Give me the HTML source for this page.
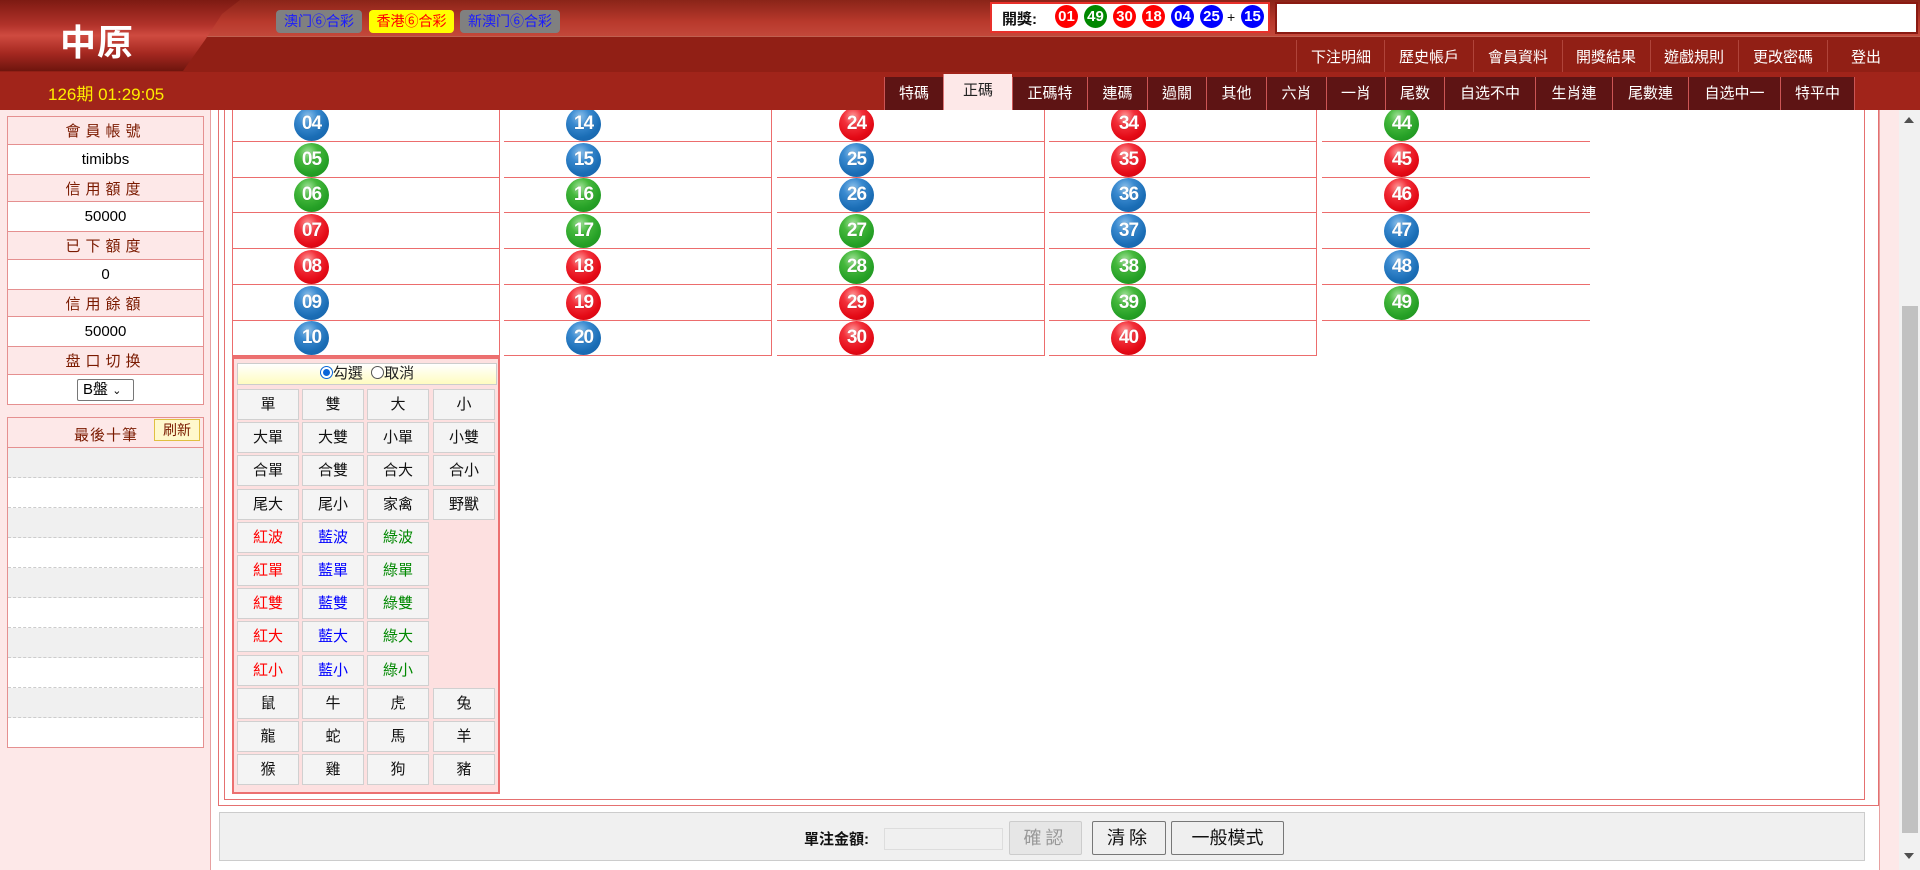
<!DOCTYPE html>
<html><head><meta charset="utf-8">
<style>
*{margin:0;padding:0;box-sizing:border-box}
body{width:1920px;height:870px;overflow:hidden;position:relative;background:#fff;font-family:"Liberation Sans","Noto Sans CJK TC",sans-serif;font-size:15px}
.abs{position:absolute}
#hdr{position:absolute;left:0;top:0;width:1920px;height:110px;z-index:5;background:#a1241a;overflow:hidden}
.ball{position:absolute;width:35px;height:34px;border-radius:50%;color:#fff;font-weight:bold;font-size:19px;text-align:center;line-height:34px;letter-spacing:-1px;text-shadow:0 0 1px rgba(0,0,0,.3)}
.b{background:radial-gradient(circle at 40% 28%,#8cc0ea 0,#3a8ad0 30%,#1a6db5 65%,#1760a6 100%)}
.r{background:radial-gradient(circle at 40% 28%,#ff9a9a 0,#f2303a 30%,#e40a16 65%,#c8000c 100%)}
.g{background:radial-gradient(circle at 40% 28%,#a2e29a 0,#45b83c 30%,#25a026 65%,#1d8a1d 100%)}
.cell{position:absolute;width:268px;height:36px;border-bottom:1px solid #ec6d6d}
.cr{border-right:1px solid #ec6d6d}
.cl{border-left:1px solid #ec6d6d}
.x1{left:232px}.x2{left:504px}.x3{left:777px}.x4{left:1049px}.x5{left:1322px}
.bx1{left:294px}.bx2{left:566px}.bx3{left:839px}.bx4{left:1111px}.bx5{left:1384px}
.y1{top:106px}.y2{top:142px}.y3{top:177px}.y4{top:213px}.y5{top:249px}.y6{top:285px}.y7{top:320px}
.by1{top:107px}.by2{top:143px}.by3{top:178px}.by4{top:214px}.by5{top:250px}.by6{top:286px}.by7{top:321px}
.btn{position:absolute;width:62px;height:31px;background:#f4f4f4;border:1px solid #d0d0d0;text-align:center;line-height:29px;font-size:15px;color:#111}
.k1{left:237px}.k2{left:302px}.k3{left:367px}.k4{left:433px}
.rd{color:#f00}.bl{color:#00f}.gr{color:#080}
.tab{position:absolute;top:77px;height:33px;background:#5e1414;border-left:1px solid #c55;color:#fff;text-align:center;line-height:33px;font-size:15px}
.nav{position:absolute;top:46px;height:24px;line-height:24px;color:#fff;font-size:15px;text-align:center;width:88px}
.sep{position:absolute;top:40px;width:1px;height:32px;background:#b0443a}
.lt td{border:1px solid #e59090;text-align:center}
.lb{position:absolute;width:23px;height:23px;border-radius:50%;color:#fff;font-weight:bold;font-size:15px;line-height:23px;text-align:center;top:5px}
</style></head><body>

<div id="hdr">
  <div class="abs" style="left:0;top:0;width:1920px;height:36px;background:linear-gradient(#8a2418,#b8392c 60%,#c3483a)"></div>
  <div class="abs" style="left:0;top:36px;width:1920px;height:36px;background:#911f15;border-top:1px solid #c06050"></div>
  <div class="abs" style="left:0;top:0;width:240px;height:71px;background:linear-gradient(#7d1a12,#b2322a 35%,#cf4b40 50%,#a52820 75%,#6e150e);clip-path:polygon(0 0,240px 0,222px 14px,205px 40px,183px 71px,0 71px)"></div>
  <div class="abs" style="left:60px;top:14px;font-size:36px;font-weight:bold;color:#fff;letter-spacing:1px">中原</div>
  <div class="abs" style="left:48px;top:80px;font-size:17px;color:#ffec00">126期 01:29:05</div>
  <div class="abs" style="left:276px;top:10px;width:86px;height:23px;background:#808080;border-radius:4px;color:#1a1aff;font-size:14px;line-height:23px;text-align:center">澳门⑥合彩</div>
  <div class="abs" style="left:369px;top:10px;width:85px;height:23px;background:#ffff00;border-radius:4px;color:#f00;font-size:14px;line-height:23px;text-align:center">香港⑥合彩</div>
  <div class="abs" style="left:460px;top:10px;width:100px;height:23px;background:#808080;border-radius:4px;color:#1a1aff;font-size:14px;line-height:23px;text-align:center">新澳门⑥合彩</div>
  <div class="abs" style="left:990px;top:2px;width:280px;height:31px;background:#fff;border:2px solid #e8302a">
    <span class="abs" style="left:10px;top:4px;font-size:15px;font-weight:bold;color:#111">開獎:</span>
  </div>
  <div class="lb" style="left:1055px;background:#f00">01</div>
  <div class="lb" style="left:1084px;background:#080">49</div>
  <div class="lb" style="left:1113px;background:#f00">30</div>
  <div class="lb" style="left:1142px;background:#f00">18</div>
  <div class="lb" style="left:1171px;background:#00f">04</div>
  <div class="lb" style="left:1200px;background:#00f">25</div>
  <div class="abs" style="left:1227px;top:9px;font-size:14px;color:#111">+</div>
  <div class="lb" style="left:1241px;background:#00f">15</div>
  <div class="abs" style="left:1275px;top:2px;width:643px;height:32px;background:#fff;border:2px solid #8a1a12"></div>

  <div class="sep" style="left:1296px"></div><div class="sep" style="left:1384px"></div><div class="sep" style="left:1473px"></div><div class="sep" style="left:1562px"></div><div class="sep" style="left:1650px"></div><div class="sep" style="left:1738px"></div><div class="sep" style="left:1827px"></div>
  <div class="nav" style="left:1297px">下注明細</div>
  <div class="nav" style="left:1385px">歷史帳戶</div>
  <div class="nav" style="left:1474px">會員資料</div>
  <div class="nav" style="left:1562px">開獎結果</div>
  <div class="nav" style="left:1650px">遊戲規則</div>
  <div class="nav" style="left:1739px">更改密碼</div>
  <div class="nav" style="left:1822px">登出</div>

  <div class="tab" style="left:884px;width:59px">特碼</div>
  <div class="tab" style="left:943px;width:69px;top:74px;height:36px;background:#fde8e8;color:#222;border-color:#d77">正碼</div>
  <div class="tab" style="left:1012px;width:75px">正碼特</div>
  <div class="tab" style="left:1087px;width:60px">連碼</div>
  <div class="tab" style="left:1147px;width:59px">過關</div>
  <div class="tab" style="left:1206px;width:60px">其他</div>
  <div class="tab" style="left:1266px;width:60px">六肖</div>
  <div class="tab" style="left:1326px;width:59px">一肖</div>
  <div class="tab" style="left:1385px;width:59px">尾数</div>
  <div class="tab" style="left:1444px;width:91px">自选不中</div>
  <div class="tab" style="left:1535px;width:77px">生肖連</div>
  <div class="tab" style="left:1612px;width:76px">尾數連</div>
  <div class="tab" style="left:1688px;width:92px">自选中一</div>
  <div class="tab" style="left:1780px;width:75px;border-right:1px solid #c55">特平中</div>
</div>

<!-- left panel -->
<div class="abs" style="left:0;top:110px;width:211px;height:760px;background:#fde8e8;border-right:1px solid #e7a0a0"></div>
<table class="abs lt" style="left:7px;top:116px;width:197px;border-collapse:collapse;font-size:15px">
<tr style="height:28px;background:#fde8e8;color:#7a1a00;letter-spacing:5px"><td>會員帳號</td></tr>
<tr style="height:30px;background:#fff"><td>timibbs</td></tr>
<tr style="height:27px;background:#fde8e8;color:#7a1a00;letter-spacing:5px"><td>信用額度</td></tr>
<tr style="height:30px;background:#fff"><td>50000</td></tr>
<tr style="height:28px;background:#fde8e8;color:#7a1a00;letter-spacing:5px"><td>已下額度</td></tr>
<tr style="height:30px;background:#fff"><td>0</td></tr>
<tr style="height:27px;background:#fde8e8;color:#7a1a00;letter-spacing:5px"><td>信用餘額</td></tr>
<tr style="height:30px;background:#fff"><td>50000</td></tr>
<tr style="height:28px;background:#fde8e8;color:#7a1a00;letter-spacing:5px"><td>盘口切换</td></tr>
<tr style="height:30px;background:#fff"><td><span style="display:inline-block;width:57px;height:22px;border:1px solid #777;border-radius:2px;font-size:15px;line-height:20px;text-align:left;padding-left:5px">B盤 <span style="font-size:11px">&#8964;</span></span></td></tr>
</table>
<div class="abs" style="left:7px;top:417px;width:197px;height:331px;border:1px solid #e59090;background:#fff">
  <div style="height:30px;background:#fde8e8;border-bottom:1px solid #e59090;position:relative;color:#7a1a00">
    <span class="abs" style="left:66px;top:6px;letter-spacing:1px">最後十筆</span>
    <span class="abs" style="left:146px;top:1px;width:46px;height:22px;background:#fff8cc;border:1px solid #e0c040;font-size:14px;text-align:center;line-height:20px">刷新</span>
  </div>
  <div style="height:30px;background:#f0f0f0;border-bottom:1px dashed #ccc"></div>
  <div style="height:30px;background:#fff;border-bottom:1px dashed #ccc"></div>
  <div style="height:30px;background:#f0f0f0;border-bottom:1px dashed #ccc"></div>
  <div style="height:30px;background:#fff;border-bottom:1px dashed #ccc"></div>
  <div style="height:30px;background:#f0f0f0;border-bottom:1px dashed #ccc"></div>
  <div style="height:30px;background:#fff;border-bottom:1px dashed #ccc"></div>
  <div style="height:30px;background:#f0f0f0;border-bottom:1px dashed #ccc"></div>
  <div style="height:30px;background:#fff;border-bottom:1px dashed #ccc"></div>
  <div style="height:30px;background:#f0f0f0;border-bottom:1px dashed #ccc"></div>
</div>

<!-- main frame -->
<div class="abs" style="left:218px;top:100px;width:1661px;height:706px;border:1px solid #e57070;border-top:none"></div>
<div class="abs" style="left:224px;top:100px;width:1641px;height:700px;border:1px solid #e57070;border-top:none"></div>
<div class="abs" style="left:1879px;top:110px;width:20px;height:760px;background:#fde8e8;border-left:1px solid #e7a0a0"></div>
<!-- scrollbar -->
<div class="abs" style="left:1899px;top:110px;width:21px;height:760px;background:#f1f1f1"></div>
<div class="abs" style="left:1902px;top:306px;width:16px;height:527px;background:#c1c1c1"></div>
<div class="abs" style="left:1904px;top:117px;width:0;height:0;border-left:5px solid transparent;border-right:5px solid transparent;border-bottom:6px solid #505050"></div>
<div class="abs" style="left:1904px;top:853px;width:0;height:0;border-left:5px solid transparent;border-right:5px solid transparent;border-top:6px solid #505050"></div>

<!-- grid col1 -->
<div class="cell cl cr x1 y1"></div><div class="ball b bx1 by1">04</div>
<div class="cell cl cr x1 y2"></div><div class="ball g bx1 by2">05</div>
<div class="cell cl cr x1 y3"></div><div class="ball g bx1 by3">06</div>
<div class="cell cl cr x1 y4"></div><div class="ball r bx1 by4">07</div>
<div class="cell cl cr x1 y5"></div><div class="ball r bx1 by5">08</div>
<div class="cell cl cr x1 y6"></div><div class="ball b bx1 by6">09</div>
<div class="cell cl cr x1 y7"></div><div class="ball b bx1 by7">10</div>
<!-- col2 -->
<div class="cell cr x2 y1"></div><div class="ball b bx2 by1">14</div>
<div class="cell cr x2 y2"></div><div class="ball b bx2 by2">15</div>
<div class="cell cr x2 y3"></div><div class="ball g bx2 by3">16</div>
<div class="cell cr x2 y4"></div><div class="ball g bx2 by4">17</div>
<div class="cell cr x2 y5"></div><div class="ball r bx2 by5">18</div>
<div class="cell cr x2 y6"></div><div class="ball r bx2 by6">19</div>
<div class="cell cr x2 y7"></div><div class="ball b bx2 by7">20</div>
<!-- col3 -->
<div class="cell cr x3 y1"></div><div class="ball r bx3 by1">24</div>
<div class="cell cr x3 y2"></div><div class="ball b bx3 by2">25</div>
<div class="cell cr x3 y3"></div><div class="ball b bx3 by3">26</div>
<div class="cell cr x3 y4"></div><div class="ball g bx3 by4">27</div>
<div class="cell cr x3 y5"></div><div class="ball g bx3 by5">28</div>
<div class="cell cr x3 y6"></div><div class="ball r bx3 by6">29</div>
<div class="cell cr x3 y7"></div><div class="ball r bx3 by7">30</div>
<!-- col4 -->
<div class="cell cr x4 y1"></div><div class="ball r bx4 by1">34</div>
<div class="cell cr x4 y2"></div><div class="ball r bx4 by2">35</div>
<div class="cell cr x4 y3"></div><div class="ball b bx4 by3">36</div>
<div class="cell cr x4 y4"></div><div class="ball b bx4 by4">37</div>
<div class="cell cr x4 y5"></div><div class="ball g bx4 by5">38</div>
<div class="cell cr x4 y6"></div><div class="ball g bx4 by6">39</div>
<div class="cell cr x4 y7"></div><div class="ball r bx4 by7">40</div>
<!-- col5 -->
<div class="cell x5 y1"></div><div class="ball g bx5 by1">44</div>
<div class="cell x5 y2"></div><div class="ball r bx5 by2">45</div>
<div class="cell x5 y3"></div><div class="ball r bx5 by3">46</div>
<div class="cell x5 y4"></div><div class="ball b bx5 by4">47</div>
<div class="cell x5 y5"></div><div class="ball b bx5 by5">48</div>
<div class="cell x5 y6"></div><div class="ball g bx5 by6">49</div>

<!-- selection panel -->
<div class="abs" style="left:232px;top:356px;width:268px;height:438px;background:#fde0e0;border:2px solid #ec7070;border-top:3px solid #ec7070">
  <div class="abs" style="left:3px;top:4px;width:260px;height:22px;border:1px solid #ccc;background:linear-gradient(#fff,#fffcc0);text-align:center;font-size:15px;line-height:20px;color:#222">
    <span style="display:inline-block;width:13px;height:13px;border-radius:50%;border:1px solid #0a64d8;vertical-align:-1px;position:relative;background:#fff"><span style="position:absolute;left:2px;top:2px;width:7px;height:7px;border-radius:50%;background:#0a64d8"></span></span>勾選 &nbsp;<span style="display:inline-block;width:13px;height:13px;border-radius:50%;border:1px solid #555;vertical-align:-1px;background:#fff"></span>取消
  </div>
</div>
<div class="btn k1" style="top:389px">單</div><div class="btn k2" style="top:389px">雙</div><div class="btn k3" style="top:389px">大</div><div class="btn k4" style="top:389px">小</div>
<div class="btn k1" style="top:422px">大單</div><div class="btn k2" style="top:422px">大雙</div><div class="btn k3" style="top:422px">小單</div><div class="btn k4" style="top:422px">小雙</div>
<div class="btn k1" style="top:455px">合單</div><div class="btn k2" style="top:455px">合雙</div><div class="btn k3" style="top:455px">合大</div><div class="btn k4" style="top:455px">合小</div>
<div class="btn k1" style="top:489px">尾大</div><div class="btn k2" style="top:489px">尾小</div><div class="btn k3" style="top:489px">家禽</div><div class="btn k4" style="top:489px">野獸</div>
<div class="btn k1 rd" style="top:522px">紅波</div><div class="btn k2 bl" style="top:522px">藍波</div><div class="btn k3 gr" style="top:522px">綠波</div>
<div class="btn k1 rd" style="top:555px">紅單</div><div class="btn k2 bl" style="top:555px">藍單</div><div class="btn k3 gr" style="top:555px">綠單</div>
<div class="btn k1 rd" style="top:588px">紅雙</div><div class="btn k2 bl" style="top:588px">藍雙</div><div class="btn k3 gr" style="top:588px">綠雙</div>
<div class="btn k1 rd" style="top:621px">紅大</div><div class="btn k2 bl" style="top:621px">藍大</div><div class="btn k3 gr" style="top:621px">綠大</div>
<div class="btn k1 rd" style="top:655px">紅小</div><div class="btn k2 bl" style="top:655px">藍小</div><div class="btn k3 gr" style="top:655px">綠小</div>
<div class="btn k1" style="top:688px">鼠</div><div class="btn k2" style="top:688px">牛</div><div class="btn k3" style="top:688px">虎</div><div class="btn k4" style="top:688px">兔</div>
<div class="btn k1" style="top:721px">龍</div><div class="btn k2" style="top:721px">蛇</div><div class="btn k3" style="top:721px">馬</div><div class="btn k4" style="top:721px">羊</div>
<div class="btn k1" style="top:754px">猴</div><div class="btn k2" style="top:754px">雞</div><div class="btn k3" style="top:754px">狗</div><div class="btn k4" style="top:754px">豬</div>

<!-- bottom bar -->
<div class="abs" style="left:219px;top:812px;width:1646px;height:49px;background:#f0f0f0;border:1px solid #ccc">
  <span class="abs" style="left:584px;top:15px;font-size:15px;font-weight:bold;color:#111">單注金額:</span>
  <span class="abs" style="left:664px;top:15px;width:119px;height:22px;background:#f0f0f0;border:1px solid #ddd"></span>
  <span class="abs" style="left:789px;top:8px;width:73px;height:34px;background:#e6e6e6;border:1px solid #ccc;border-radius:2px;color:#999;font-size:18px;text-align:center;line-height:32px;letter-spacing:4px">確認</span>
  <span class="abs" style="left:872px;top:8px;width:74px;height:34px;background:#efefef;border:1px solid #777;border-radius:2px;color:#111;font-size:18px;text-align:center;line-height:32px;letter-spacing:4px">清除</span>
  <span class="abs" style="left:951px;top:8px;width:113px;height:34px;background:#efefef;border:1px solid #777;border-radius:2px;color:#111;font-size:18px;text-align:center;line-height:32px">一般模式</span>
</div>
</body></html>
